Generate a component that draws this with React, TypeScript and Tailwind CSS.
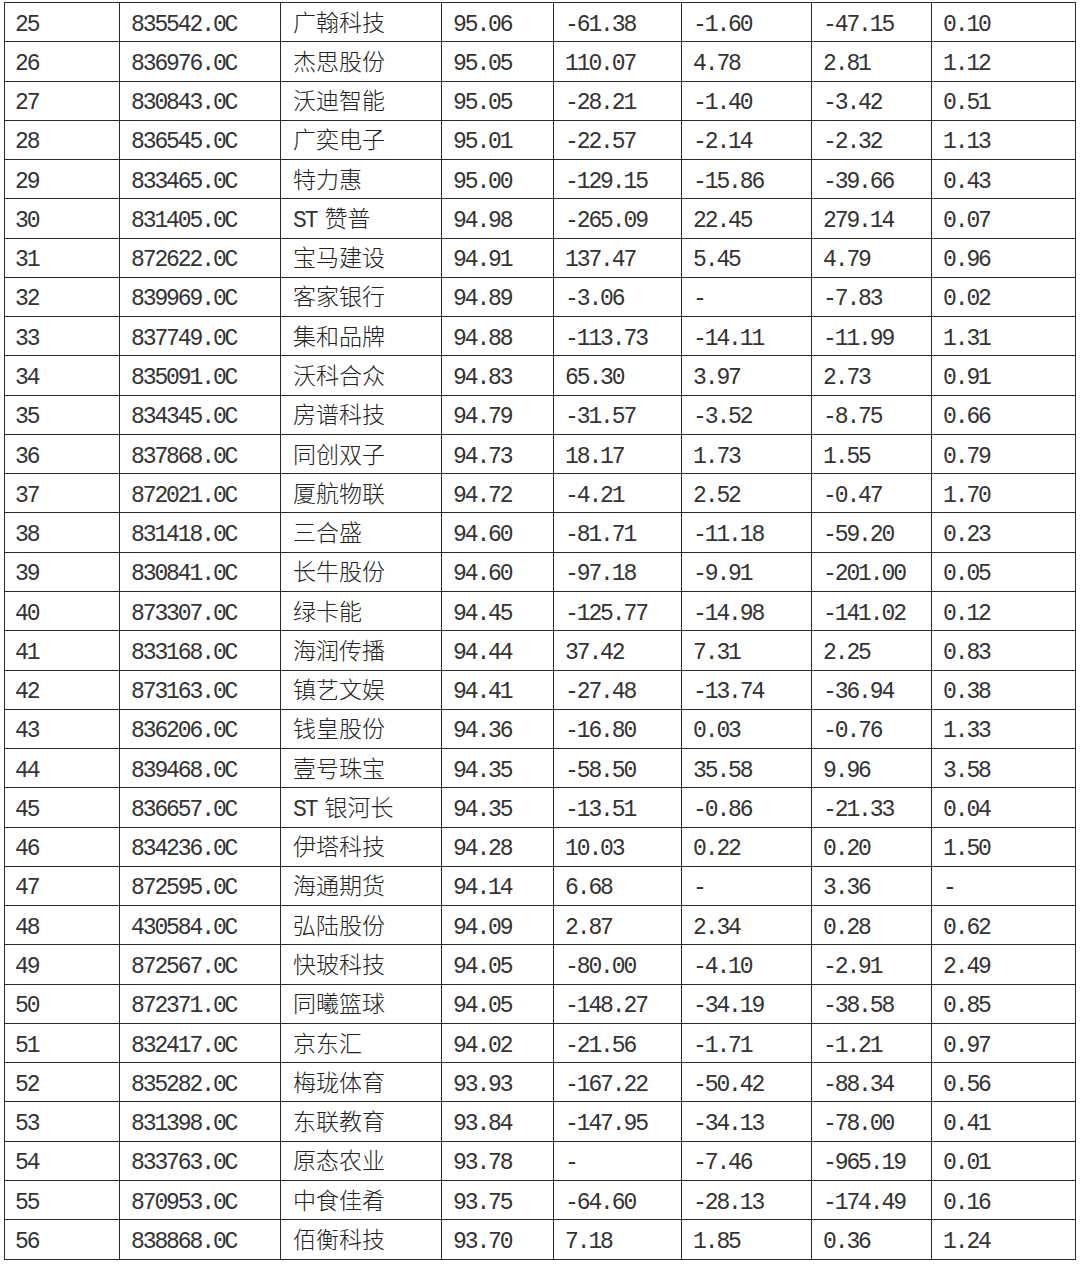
const rows: string[][] = [
  ['25', '835542.0C', '广翰科技', '95.06', '-61.38', '-1.60', '-47.15', '0.10'],
  ['26', '836976.0C', '杰思股份', '95.05', '110.07', '4.78', '2.81', '1.12'],
  ['27', '830843.0C', '沃迪智能', '95.05', '-28.21', '-1.40', '-3.42', '0.51'],
  ['28', '836545.0C', '广奕电子', '95.01', '-22.57', '-2.14', '-2.32', '1.13'],
  ['29', '833465.0C', '特力惠', '95.00', '-129.15', '-15.86', '-39.66', '0.43'],
  ['30', '831405.0C', 'ST 赞普', '94.98', '-265.09', '22.45', '279.14', '0.07'],
  ['31', '872622.0C', '宝马建设', '94.91', '137.47', '5.45', '4.79', '0.96'],
  ['32', '839969.0C', '客家银行', '94.89', '-3.06', '-', '-7.83', '0.02'],
  ['33', '837749.0C', '集和品牌', '94.88', '-113.73', '-14.11', '-11.99', '1.31'],
  ['34', '835091.0C', '沃科合众', '94.83', '65.30', '3.97', '2.73', '0.91'],
  ['35', '834345.0C', '房谱科技', '94.79', '-31.57', '-3.52', '-8.75', '0.66'],
  ['36', '837868.0C', '同创双子', '94.73', '18.17', '1.73', '1.55', '0.79'],
  ['37', '872021.0C', '厦航物联', '94.72', '-4.21', '2.52', '-0.47', '1.70'],
  ['38', '831418.0C', '三合盛', '94.60', '-81.71', '-11.18', '-59.20', '0.23'],
  ['39', '830841.0C', '长牛股份', '94.60', '-97.18', '-9.91', '-201.00', '0.05'],
  ['40', '873307.0C', '绿卡能', '94.45', '-125.77', '-14.98', '-141.02', '0.12'],
  ['41', '833168.0C', '海润传播', '94.44', '37.42', '7.31', '2.25', '0.83'],
  ['42', '873163.0C', '镇艺文娱', '94.41', '-27.48', '-13.74', '-36.94', '0.38'],
  ['43', '836206.0C', '钱皇股份', '94.36', '-16.80', '0.03', '-0.76', '1.33'],
  ['44', '839468.0C', '壹号珠宝', '94.35', '-58.50', '35.58', '9.96', '3.58'],
  ['45', '836657.0C', 'ST 银河长', '94.35', '-13.51', '-0.86', '-21.33', '0.04'],
  ['46', '834236.0C', '伊塔科技', '94.28', '10.03', '0.22', '0.20', '1.50'],
  ['47', '872595.0C', '海通期货', '94.14', '6.68', '-', '3.36', '-'],
  ['48', '430584.0C', '弘陆股份', '94.09', '2.87', '2.34', '0.28', '0.62'],
  ['49', '872567.0C', '快玻科技', '94.05', '-80.00', '-4.10', '-2.91', '2.49'],
  ['50', '872371.0C', '同曦篮球', '94.05', '-148.27', '-34.19', '-38.58', '0.85'],
  ['51', '832417.0C', '京东汇', '94.02', '-21.56', '-1.71', '-1.21', '0.97'],
  ['52', '835282.0C', '梅珑体育', '93.93', '-167.22', '-50.42', '-88.34', '0.56'],
  ['53', '831398.0C', '东联教育', '93.84', '-147.95', '-34.13', '-78.00', '0.41'],
  ['54', '833763.0C', '原态农业', '93.78', '-', '-7.46', '-965.19', '0.01'],
  ['55', '870953.0C', '中食佳肴', '93.75', '-64.60', '-28.13', '-174.49', '0.16'],
  ['56', '838868.0C', '佰衡科技', '93.70', '7.18', '1.85', '0.36', '1.24'],
];

const widths = [115, 161, 161, 112, 128, 130, 120, 144];

// digits: mono font squeezed a bit so the advance matches the half-width digits of the source
const num = "font-['Liberation_Mono',monospace] text-[23px] tracking-[-2.1px] leading-none translate-y-[3px] text-[#333]";
const cjk = "font-['Noto_Sans_CJK_SC',sans-serif] text-[23px] font-light leading-none -translate-y-[1px] text-[#222]";

function NameCell({ name }: { name: string }) {
  if (name.startsWith('ST ')) {
    return (
      <>
        <span className={num + ' mr-[8px]'}>ST</span>
        <span className={cjk}>{name.slice(3)}</span>
      </>
    );
  }
  return <span className={cjk}>{name}</span>;
}

export default function App() {
  return (
    <div className="w-[1080px] h-[1264px] bg-white pt-[2px] pl-[4px]">
      <table className="border-collapse table-fixed w-[1071px]">
        <colgroup>
          {widths.map((w, i) => (
            <col key={i} style={{ width: w }} />
          ))}
        </colgroup>
        <tbody>
          {rows.map(r => (
            <tr key={r[0]} className="h-[39.28px]">
              {r.map((c, i) => (
                <td key={i} className="border-[1.5px] border-[#2a2a2a] p-0 align-middle whitespace-nowrap">
                  <div className={'flex items-center ' + (i === 0 ? 'pl-[10px]' : i === 2 ? 'pl-[12px]' : 'pl-[11px]')}>
                    {i === 2 ? <NameCell name={c} /> : <span className={num}>{c}</span>}
                  </div>
                </td>
              ))}
            </tr>
          ))}
        </tbody>
      </table>
    </div>
  );
}
